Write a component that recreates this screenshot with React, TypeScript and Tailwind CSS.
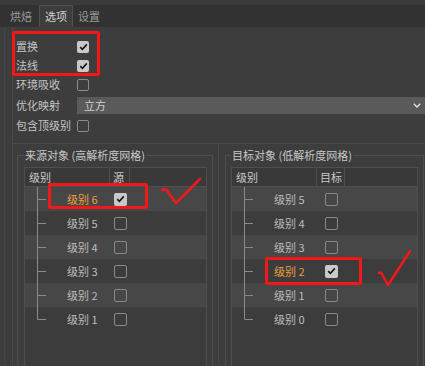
import React from "react";

type CheckProps = { checked?: boolean; size?: "sm" | "md" };

const Check = ({ checked, size = "sm" }: CheckProps) => {
  const box = size === "sm" ? "w-[12px] h-[12px]" : "w-[13px] h-[13px]";
  if (checked) {
    return (
      <div className={`${box} rounded-[2px] bg-[#c9c9c9] flex items-center justify-center`}>
        <svg width="9" height="8" viewBox="0 0 9 8">
          <path d="M1.2 4.2 L3.4 6.3 L7.8 1.4" fill="none" stroke="#151515" strokeWidth="1.6" />
        </svg>
      </div>
    );
  }
  return <div className={`${box} rounded-[2px] border border-[#8a8a8a]`} />;
};

const OptionRow = ({ label, checked }: { label: string; checked?: boolean }) => (
  <div className="flex h-[19px] items-center">
    <span className="w-[61px] text-[#c4c4c4]">{label}</span>
    <Check checked={checked} />
  </div>
);

type Level = { n: number; checked?: boolean };

const TreeRow = ({ level, index, last, col2 }: { level: Level; index: number; last: boolean; col2: string }) => {
  const light = index % 2 === 0;
  return (
    <div className={`flex h-[24px] items-center ${light ? "bg-[#474747]" : ""}`}>
      <div className="flex w-[85px] h-full items-center">
        <svg width="22" height="24" viewBox="0 0 22 24" className="shrink-0">
          <line x1="12.5" y1="0" x2="12.5" y2={last ? 12.5 : 24} stroke="#8a8a8a" strokeWidth="1" />
          <line x1="12.5" y1="12.5" x2="21" y2="12.5" stroke="#8a8a8a" strokeWidth="1" />
        </svg>
        <span className={`pl-[20px] ${level.checked ? "text-[#ee9d3c]" : "text-[#bcbcbc]"}`}>
          级别 {level.n}
        </span>
      </div>
      <div className={`${col2} flex justify-center`}>
        <Check checked={level.checked} size="md" />
      </div>
    </div>
  );
};

const Tree = ({ head, levels, col2 }: { head: string; levels: Level[]; col2: string }) => (
  <div className="h-[260px] border border-[#4e4e4e] bg-[#3c3c3c]">
    <div className="flex h-[19px] border-b border-[#4e4e4e] bg-[#393939] text-[#c8c8c8]">
      <div className="w-[85px] border-r border-[#4e4e4e] pl-[4px] leading-[18px]">级别</div>
      <div className={`${col2} border-r border-[#4e4e4e] pl-[3px] leading-[18px]`}>{head}</div>
    </div>
    {levels.map((l, i) => (
      <TreeRow key={l.n} level={l} index={i} last={i === levels.length - 1} col2={col2} />
    ))}
  </div>
);

const Group = ({ title, children, className }: { title: string; children: React.ReactNode; className: string }) => (
  <fieldset className={`${className} border border-[#4e4e4e] pt-[5px]`}>
    <legend className="px-[1px] leading-[14px] text-[#c8c8c8]">{title}</legend>
    {children}
  </fieldset>
);

export default function App() {
  const left: Level[] = [{ n: 6, checked: true }, { n: 5 }, { n: 4 }, { n: 3 }, { n: 2 }, { n: 1 }];
  const right: Level[] = [{ n: 5 }, { n: 4 }, { n: 3 }, { n: 2, checked: true }, { n: 1 }, { n: 0 }];

  return (
    <div className="relative w-[425px] h-[366px] overflow-hidden bg-[#3d3d3d] text-[11px] font-['Noto_Sans_CJK_SC',sans-serif]">
      <div className="h-[5px] bg-[#3b3b3b]" />
      {/* tabs */}
      <div className="flex h-[22px] bg-[#323232] items-stretch">
        <div className="ml-[3px] px-[7px] flex items-center text-[#9a9a9a]">烘焙</div>
        <div className="px-[5px] flex items-center bg-[#3d3d3d] border-t border-l border-r border-[#505050] text-[#d2d2d2]">选项</div>
        <div className="pl-[5px] flex items-center text-[#9a9a9a]">设置</div>
      </div>

      <div className="pl-[4px] h-[339px]">
        <div className="h-full border-l border-[#454545] pl-[7px]">
          <div className="h-full border-l border-[#4a4a4a]">
            <div className="pl-[3px] pt-[10px]">
              <OptionRow label="置换" checked />
              <OptionRow label="法线" checked />
              <OptionRow label="环境吸收" />
              <div className="flex h-[22px] items-center">
                <span className="w-[61px] text-[#c4c4c4]">优化映射</span>
                <div className="flex-1 h-[17px] bg-[#5a5a5a] flex items-center justify-between pl-[7px] pr-[4px] text-[#d0d0d0]">
                  <span>立方</span>
                  <svg width="8" height="5" viewBox="0 0 8 5">
                    <path d="M0.8 0.8 L4 4 L7.2 0.8" fill="none" stroke="#e6e6e6" strokeWidth="1.3" />
                  </svg>
                </div>
              </div>
              <OptionRow label="包含顶级别" />
            </div>

            <div className="mt-[8px] flex">
              <div className="w-[206px] border-t border-r border-[#4a4a4a] pt-[4px] pl-[4px] pr-[5px]">
                <Group title="来源对象 (高解析度网格)" className="pl-[6px] pr-[5px]">
                  <Tree head="源" levels={left} col2="w-[20px]" />
                </Group>
              </div>
              <div className="flex-1 border-t border-[#4a4a4a] pt-[4px] pl-[6px] pr-[1px]">
                <Group title="目标对象 (低解析度网格)" className="pl-[5px] pr-[5px]">
                  <Tree head="目标" levels={right} col2="w-[28px]" />
                </Group>
              </div>
            </div>
          </div>
        </div>
      </div>

      {/* red annotations */}
      <div className="absolute left-[12px] top-[31px] w-[88px] h-[45px] border-[3px] border-[#f01818] rounded-[2px] pointer-events-none" />
      <div className="absolute left-[48px] top-[183px] w-[100px] h-[26px] border-[3px] border-[#f01818] rounded-[2px] pointer-events-none" />
      <div className="absolute left-[265px] top-[257px] w-[97px] h-[28px] border-[3px] border-[#f01818] rounded-[2px] pointer-events-none" />
      <svg className="absolute left-0 top-0 pointer-events-none" width="425" height="366" viewBox="0 0 425 366">
        <path d="M162 190 Q166 188 168 192 L176 203 L200 179" fill="none" stroke="#f01818" strokeWidth="2.5" strokeLinecap="round" strokeLinejoin="round" />
        <path d="M379 273 Q381 271 383 276 L388 285 L410 251" fill="none" stroke="#f01818" strokeWidth="2.5" strokeLinecap="round" strokeLinejoin="round" />
      </svg>
    </div>
  );
}
